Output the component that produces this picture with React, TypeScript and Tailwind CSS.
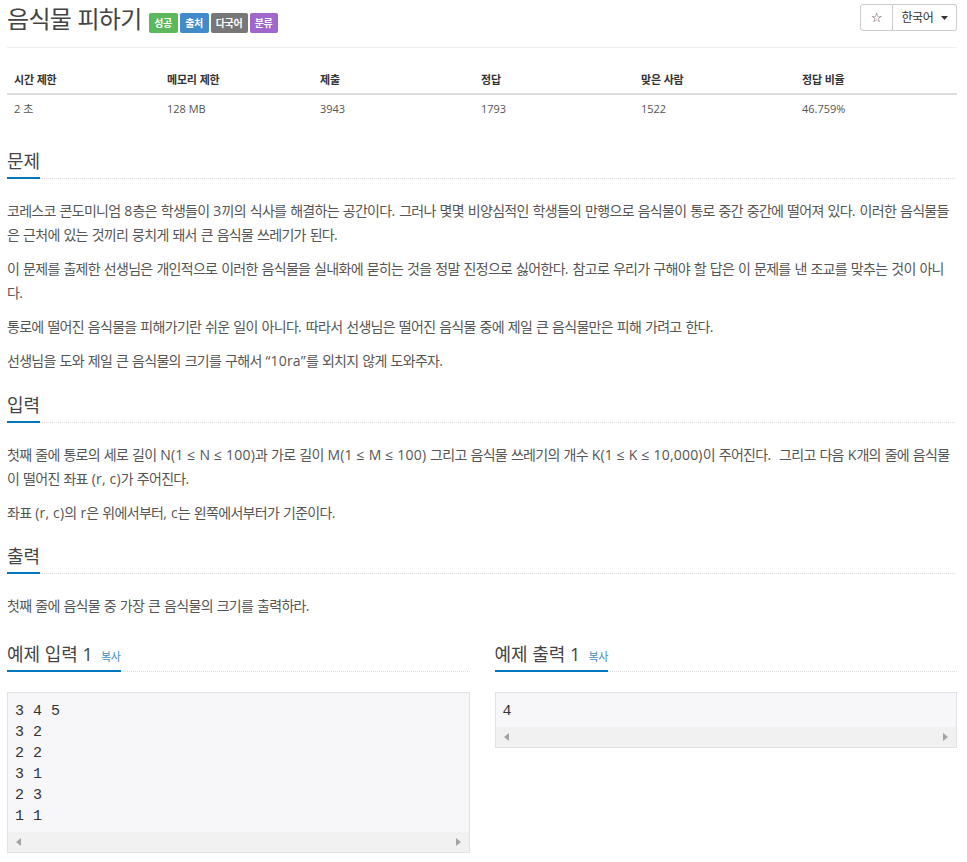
import React from "react";

const HANGUL = /([\u1100-\u11FF\u3130-\u318F\uAC00-\uD7AF]+)/;

function ko(text: string, cls: string) {
  return text.split(HANGUL).map((part, i) =>
    HANGUL.test(part) ? (
      <span key={i} className={cls}>
        {part}
      </span>
    ) : (
      <React.Fragment key={i}>{part}</React.Fragment>
    )
  );
}

const BODY_KO = "tracking-[-0.7px]";

function Headline({ title, copy }: { title: string; copy?: boolean }) {
  return (
    <div className="border-b border-dotted border-[#ddd]">
      <h2 className="inline-block border-b-2 border-[#0076c0] mb-[-1px] pb-[5px] text-[18px] leading-[22px] text-[#444] font-normal">
        {ko(title, "tracking-[0px]")}
        {copy && (
          <span className="ml-[8px] text-[11px] leading-none tracking-[-0.3px] text-[#428bca]">복사</span>
        )}
      </h2>
    </div>
  );
}

function Para({ lines }: { lines: string[] }) {
  return (
    <p className="leading-[24px] text-[14px] tracking-[0.2px] text-[#555] whitespace-nowrap">
      {lines.map((l, i) => (
        <React.Fragment key={i}>
          {i > 0 && <br />}
          {ko(l, BODY_KO)}
        </React.Fragment>
      ))}
    </p>
  );
}

function ScrollBar() {
  return (
    <div className="h-[20px] bg-[#f1f1f1] flex items-center justify-between px-[8px]">
      <svg width="5" height="8" viewBox="0 0 5 8">
        <polygon points="5,0 5,8 0,4" fill="#a3a3a3" />
      </svg>
      <svg width="5" height="8" viewBox="0 0 5 8">
        <polygon points="0,0 0,8 5,4" fill="#a3a3a3" />
      </svg>
    </div>
  );
}

function Sample({ title, lines }: { title: string; lines: string[] }) {
  return (
    <div className="flex flex-col min-w-0">
      <Headline title={title} copy />
      <div className="mt-[20px] border border-[#e1e1e8] bg-[#f7f7f9]">
        <pre className="pt-[8px] pb-[5px] px-[7px] font-['Liberation_Mono',monospace] text-[15px] leading-[21px] text-[#333]">
          {lines.join("\n")}
        </pre>
        <ScrollBar />
      </div>
    </div>
  );
}

export default function App() {
  const heads = ["시간 제한", "메모리 제한", "제출", "정답", "맞은 사람", "정답 비율"];
  const vals = ["2 초", "128 MB", "3943", "1793", "1522", "46.759%"];
  return (
    <div className="min-h-[862px] bg-white pl-[7px] pr-[10px] pb-[8px] font-['Open_Sans','Noto_Sans_CJK_KR',sans-serif] text-[#555]">
      {/* header */}
      <div className="h-[48px] border-b border-[#eee] flex justify-between items-start">
        <div className="flex items-end pt-[4px]">
          <h1 className="text-[24px] leading-[30px] text-[#444] font-normal">
            {ko("음식물 피하기", "tracking-[-0.7px]")}
          </h1>
          <div className="flex gap-[2px] ml-[7px] mb-[1px] text-[10px] font-bold tracking-[-0.4px] text-white">
            <span className="w-[29px] h-[20px] flex items-center justify-center bg-[#5cb85c] rounded-[2px]">성공</span>
            <span className="w-[29px] h-[20px] flex items-center justify-center bg-[#428bca] rounded-[2px]">출처</span>
            <span className="w-[37px] h-[20px] flex items-center justify-center bg-[#777] rounded-[2px]">다국어</span>
            <span className="w-[28px] h-[20px] flex items-center justify-center bg-[#a066cc] rounded-[2px]">분류</span>
          </div>
        </div>
        <div className="mt-[4px] flex h-[27px] text-[#333]">
          <div className="w-[33px] border border-[#ccc] rounded-l-[3px] flex items-center justify-center text-[13px] font-['DejaVu_Sans',sans-serif]">
            ☆
          </div>
          <div className="w-[64px] border border-l-0 border-[#ccc] rounded-r-[3px] flex items-center justify-center gap-[7px] text-[12px] tracking-[-0.3px]">
            <span>한국어</span>
            <svg width="7" height="4" viewBox="0 0 7 4">
              <polygon points="0,0 7,0 3.5,4" fill="#333" />
            </svg>
          </div>
        </div>
      </div>

      {/* table */}
      <div className="mt-[18px] grid grid-cols-[153px_153px_161px_160px_161px_1fr]">
        {heads.map((h) => (
          <div
            key={h}
            className="px-[7px] py-[7px] leading-[13px] border-b-2 border-[#ddd] font-bold text-[#333] text-[11px]"
          >
            {ko(h, "tracking-[-0.2px]")}
          </div>
        ))}
        {vals.map((v) => (
          <div key={v} className="px-[7px] py-[7px] leading-[13px] text-[11px] text-[#555]">
            {ko(v, "tracking-[-0.2px]")}
          </div>
        ))}
      </div>

      {/* 문제 */}
      <div className="mt-[28px] pr-[2px]">
        <Headline title="문제" />
        <div className="mt-[20px] flex flex-col gap-[10px]">
          <Para
            lines={[
              "코레스코 콘도미니엄 8층은 학생들이 3끼의 식사를 해결하는 공간이다. 그러나 몇몇 비양심적인 학생들의 만행으로 음식물이 통로 중간 중간에 떨어져 있다. 이러한 음식물들",
              "은 근처에 있는 것끼리 뭉치게 돼서 큰 음식물 쓰레기가 된다.",
            ]}
          />
          <Para
            lines={[
              "이 문제를 출제한 선생님은 개인적으로 이러한 음식물을 실내화에 묻히는 것을 정말 진정으로 싫어한다. 참고로 우리가 구해야 할 답은 이 문제를 낸 조교를 맞추는 것이 아니",
              "다.",
            ]}
          />
          <Para lines={["통로에 떨어진 음식물을 피해가기란 쉬운 일이 아니다. 따라서 선생님은 떨어진 음식물 중에 제일 큰 음식물만은 피해 가려고 한다."]} />
          <Para lines={["선생님을 도와 제일 큰 음식물의 크기를 구해서 “10ra”를 외치지 않게 도와주자."]} />
        </div>
      </div>

      {/* 입력 */}
      <div className="mt-[21px] pr-[2px]">
        <Headline title="입력" />
        <div className="mt-[20px] flex flex-col gap-[10px]">
          <Para
            lines={[
              "첫째 줄에 통로의 세로 길이 N(1 ≤ N ≤ 100)과 가로 길이 M(1 ≤ M ≤ 100) 그리고 음식물 쓰레기의 개수 K(1 ≤ K ≤ 10,000)이 주어진다.\u00a0 그리고 다음 K개의 줄에 음식물",
              "이 떨어진 좌표 (r, c)가 주어진다.",
            ]}
          />
          <Para lines={["좌표 (r, c)의 r은 위에서부터, c는 왼쪽에서부터가 기준이다."]} />
        </div>
      </div>

      {/* 출력 */}
      <div className="mt-[20px] pr-[2px]">
        <Headline title="출력" />
        <div className="mt-[20px] flex flex-col gap-[10px]">
          <Para lines={["첫째 줄에 음식물 중 가장 큰 음식물의 크기를 출력하라."]} />
        </div>
      </div>

      {/* samples */}
      <div className="mt-[25px] grid grid-cols-2 gap-[25px] items-start">
        <Sample title="예제 입력 1" lines={["3 4 5", "3 2", "2 2", "3 1", "2 3", "1 1"]} />
        <Sample title="예제 출력 1" lines={["4"]} />
      </div>
    </div>
  );
}
